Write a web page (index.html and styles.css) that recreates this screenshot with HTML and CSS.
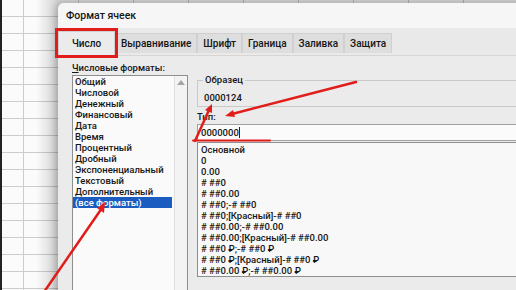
FILE: index.html
```html
<!DOCTYPE html>
<html lang="ru">
<head>
    <meta charset="UTF-8">
    <title>Формат ячеек</title>
    <link rel="stylesheet" href="styles.css">
</head>
<body>
    <div class="desk">
        <div class="dialog">
            <div class="titlebar">Формат ячеек</div>

            <div class="tabs">
                <div class="tab active">Число</div>
                <div class="tab">Выравнивание</div>
                <div class="tab">Шрифт</div>
                <div class="tab">Граница</div>
                <div class="tab">Заливка</div>
                <div class="tab">Защита</div>
            </div>

            <div class="content">
                <div class="left-col">
                    <div class="label"><u>Ч</u>исловые форматы:</div>
                    <div class="listbox">
                        <div class="items">
                            <div class="item">Общий</div>
                            <div class="item">Числовой</div>
                            <div class="item">Денежный</div>
                            <div class="item">Финансовый</div>
                            <div class="item">Дата</div>
                            <div class="item">Время</div>
                            <div class="item">Процентный</div>
                            <div class="item">Дробный</div>
                            <div class="item">Экспоненциальный</div>
                            <div class="item">Текстовый</div>
                            <div class="item">Дополнительный</div>
                            <div class="item selected">(все форматы)</div>
                        </div>
                        <div class="scrollbar">
                            <span class="arrow-up"></span>
                        </div>
                    </div>
                </div>

                <div class="right-col">
                    <fieldset class="sample">
                        <legend>Образец</legend>
                        <div class="sample-value">0000124</div>
                    </fieldset>

                    <div class="label type-label">Тип:</div>
                    <div class="type-input">0000000<span class="caret"></span></div>

                    <div class="codes">
                        <div class="item">Основной</div>
                        <div class="item">0</div>
                        <div class="item">0.00</div>
                        <div class="item"># ##0</div>
                        <div class="item"># ##0.00</div>
                        <div class="item"># ##0;-# ##0</div>
                        <div class="item"># ##0;[Красный]-# ##0</div>
                        <div class="item"># ##0.00;-# ##0.00</div>
                        <div class="item"># ##0.00;[Красный]-# ##0.00</div>
                        <div class="item"># ##0 ₽;-# ##0 ₽</div>
                        <div class="item"># ##0 ₽;[Красный]-# ##0 ₽</div>
                        <div class="item"># ##0.00 ₽;-# ##0.00 ₽</div>
                    </div>
                </div>
            </div>
        </div>

        <!-- пометки красным поверх окна -->
        <svg class="marks" width="516" height="290" viewBox="0 0 516 290">
            <g fill="none" stroke="#e11d1a" stroke-linecap="round">
                <rect x="56.5" y="29.5" width="60" height="27" stroke-width="3"/>
                <line x1="44" y1="292" x2="102" y2="208" stroke-width="2.5"/>
                <line x1="356" y1="82" x2="232" y2="114" stroke-width="2.5"/>
                <line x1="195" y1="141" x2="209" y2="110" stroke-width="2.5"/>
                <line x1="193" y1="140.5" x2="270" y2="140.5" stroke-width="2"/>
            </g>
            <g fill="#e11d1a">
                <polygon points="105,202 104,213 97,208"/>
                <polygon points="225,116 233,110 235,117"/>
                <polygon points="212,104 212,113 205,110"/>
            </g>
        </svg>
    </div>
</body>
</html>
```

FILE: styles.css
```css
* {
    margin: 0;
    padding: 0;
    box-sizing: border-box;
}

body {
    background: #fff;
    font-family: Roboto, 'Noto Sans', sans-serif;
    font-size: 9.5px;
    font-weight: 500;
    color: #161616;
}

/* лист Excel на заднем плане */
.desk {
    position: relative;
    width: 516px;
    height: 290px;
    overflow: hidden;
    padding: 3px 0 0 58px;
    background:
        linear-gradient(90deg, #222 0, #222 2px, transparent 2px),
        linear-gradient(90deg, rgba(0,0,0,0) 36px, rgba(0,0,0,0.16) 58px),
        repeating-linear-gradient(90deg, transparent 0, transparent 23px, #cdcdcd 23px, #cdcdcd 24px, transparent 24px, transparent 55px),
        repeating-linear-gradient(180deg, transparent 0, transparent 16px, #cdcdcd 16px, #cdcdcd 17px),
        #fbfbfb;
}

.dialog {
    width: 520px;
    height: 300px;
    background: #ebebeb;
    border-radius: 6px 0 0 0;
    box-shadow: -2px 0 8px rgba(0,0,0,0.25);
    overflow: hidden;
}

.titlebar {
    height: 25px;
    line-height: 25px;
    padding-left: 8px;
    background: #f6f6f6;
    font-size: 10.5px;
}

.tabs {
    height: 28px;
    display: flex;
    align-items: flex-end;
    background: #e9e9e9;
    border-bottom: 1px solid #d6d6d6;
    font-size: 10px;
}

.tab {
    height: 20px;
    line-height: 19px;
    padding: 0 5px;
    background: #dedede;
    border: 1px solid #d0d0d0;
    border-bottom: none;
    margin-bottom: 2px;
}

.tab.active {
    height: 25px;
    line-height: 24px;
    width: 57px;
    text-align: center;
    background: #ebebeb;
    margin-bottom: -1px;
    border-color: #cfcfcf;
}

.content {
    display: flex;
    padding: 4px 0 0 14px;
    gap: 9px;
}

.label {
    height: 15px;
    line-height: 15px;
}

.left-col {
    width: 116px;
    flex-shrink: 0;
}

.listbox {
    display: flex;
    height: 240px;
    background: #fafafa;
    border: 1px solid #8e8e8e;
}

.items {
    flex: 1;
}

.item {
    height: 11px;
    line-height: 11px;
    padding-left: 2px;
    white-space: nowrap;
}

.item.selected {
    background: #1a5cc0;
    color: #fff;
    margin-right: 2px;
}

.scrollbar {
    width: 13px;
    background: #f3f3f3;
    border-left: 1px solid #e0e0e0;
    display: flex;
    justify-content: center;
    padding-top: 4px;
}

.arrow-up {
    width: 0;
    height: 0;
    border-left: 4px solid transparent;
    border-right: 4px solid transparent;
    border-bottom: 5px solid #a4a4a4;
}

.right-col {
    flex: 1;
}

.sample {
    border: 1px solid #c9c9c9;
    border-right: none;
    margin-top: 14px;
    padding: 0 0 3px 6px;
}

.sample legend {
    padding: 0 2px;
    margin-left: -1px;
    line-height: 12px;
}

.sample-value {
    line-height: 11px;
    padding-top: 6px;
}

.type-label {
    height: 12px;
    line-height: 12px;
    margin-top: 4px;
}

.type-input {
    height: 17px;
    line-height: 15px;
    padding-left: 3px;
    margin-top: 1px;
    background: #fbfbfb;
    border: 1px solid #a0a0a0;
    border-right: none;
}

.caret {
    display: inline-block;
    width: 1px;
    height: 11px;
    background: #222;
    vertical-align: -2px;
}

.codes {
    height: 135px;
    margin-top: 1px;
    padding-top: 1px;
    background: #f8f8f8;
    border: 1px solid #8e8e8e;
    border-right: none;
}

.codes .item {
    padding-left: 3px;
}

.marks {
    position: absolute;
    left: 0;
    top: 0;
    pointer-events: none;
}
```
